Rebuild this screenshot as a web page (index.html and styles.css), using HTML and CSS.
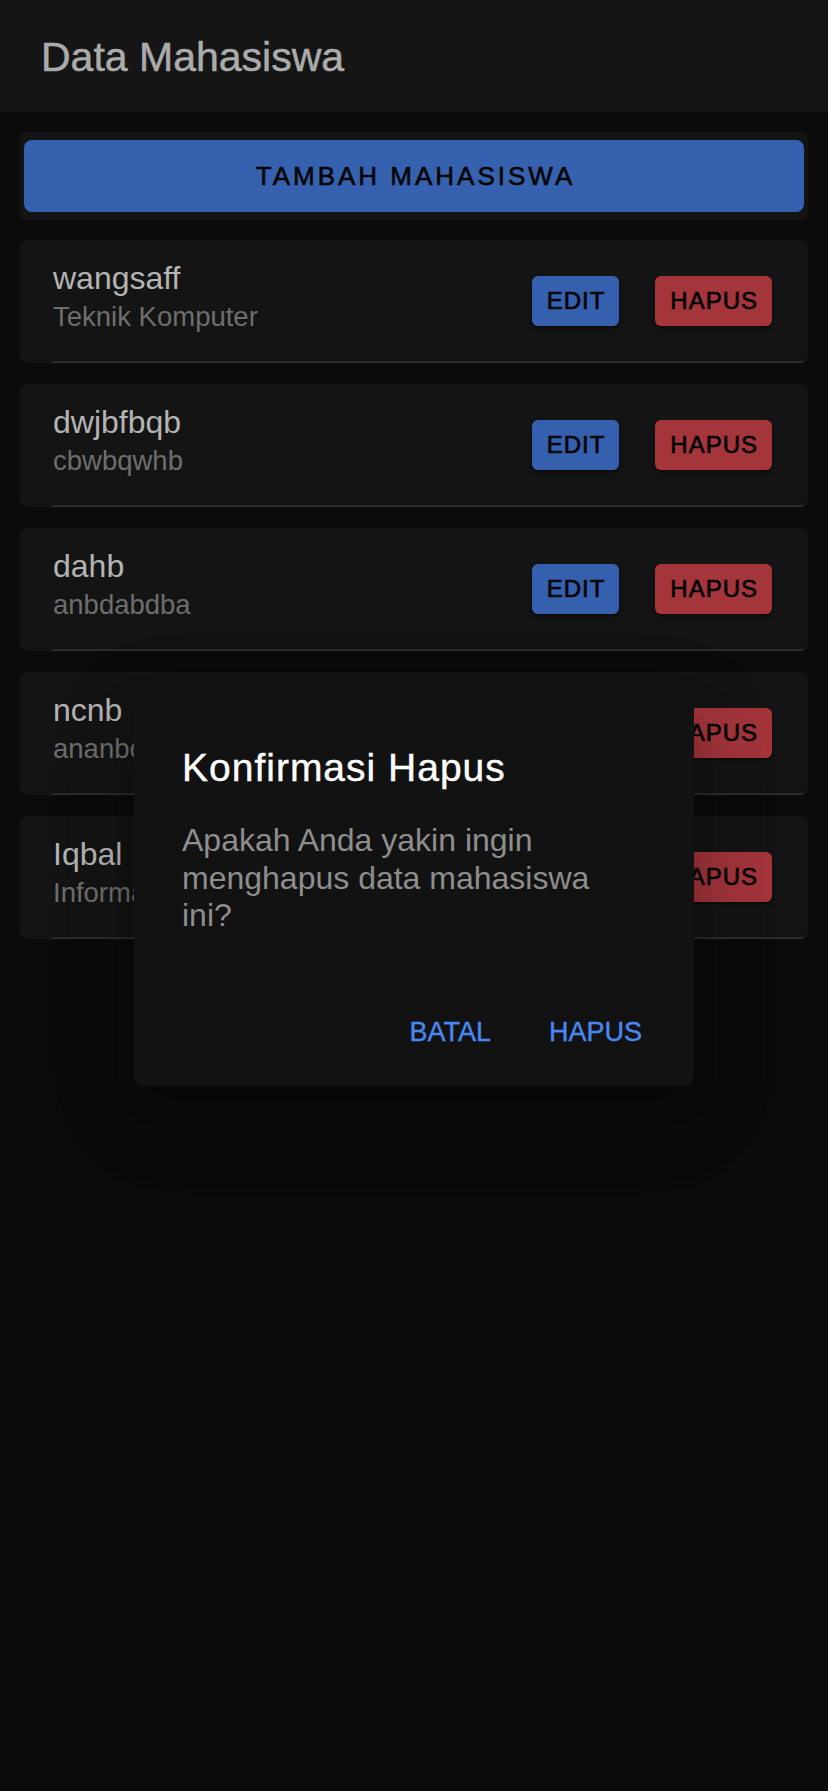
FILE: index.html
```html
<!DOCTYPE html>
<html lang="id">
<head>
<meta charset="utf-8">
<title>Data Mahasiswa</title>
<link rel="stylesheet" href="styles.css">
</head>
<body>
<header class="appbar">
  <h1 class="appbar-title">Data Mahasiswa</h1>
</header>
<main class="content">
  <div class="add-wrap">
    <button class="add-btn">TAMBAH MAHASISWA</button>
  </div>
  <ul class="list">
    <li class="card">
      <div class="card-row">
        <div class="info"><div class="name">wangsaff</div><div class="major">Teknik Komputer</div></div>
        <div class="actions"><button class="btn btn-edit">EDIT</button><button class="btn btn-delete">HAPUS</button></div>
      </div>
    </li>
    <li class="card">
      <div class="card-row">
        <div class="info"><div class="name">dwjbfbqb</div><div class="major">cbwbqwhb</div></div>
        <div class="actions"><button class="btn btn-edit">EDIT</button><button class="btn btn-delete">HAPUS</button></div>
      </div>
    </li>
    <li class="card">
      <div class="card-row">
        <div class="info"><div class="name">dahb</div><div class="major">anbdabdba</div></div>
        <div class="actions"><button class="btn btn-edit">EDIT</button><button class="btn btn-delete">HAPUS</button></div>
      </div>
    </li>
    <li class="card">
      <div class="card-row">
        <div class="info"><div class="name">ncnb</div><div class="major">ananbcbd</div></div>
        <div class="actions"><button class="btn btn-edit">EDIT</button><button class="btn btn-delete">HAPUS</button></div>
      </div>
    </li>
    <li class="card">
      <div class="card-row">
        <div class="info"><div class="name">Iqbal</div><div class="major">Informatika</div></div>
        <div class="actions"><button class="btn btn-edit">EDIT</button><button class="btn btn-delete">HAPUS</button></div>
      </div>
    </li>
  </ul>
</main>
<div class="dialog" role="dialog" aria-labelledby="dlg-title">
  <h2 class="dialog-title" id="dlg-title">Konfirmasi Hapus</h2>
  <p class="dialog-body">Apakah Anda yakin ingin menghapus data mahasiswa ini?</p>
  <div class="dialog-actions">
    <button class="text-btn">BATAL</button>
    <button class="text-btn">HAPUS</button>
  </div>
</div>
</body>
</html>
```
FILE: styles.css
```css
* { box-sizing: border-box; }

html, body {
  margin: 0;
  padding: 0;
}

body {
  width: 828px;
  min-height: 1791px;
  background: #0b0b0b;
  font-family: "Liberation Sans", Arial, sans-serif;
  position: relative;
}

button {
  font-family: inherit;
  border: none;
  cursor: pointer;
}

.appbar {
  height: 112px;
  background: #151515;
  padding: 33px 41px 0;
}

.appbar-title {
  margin: 0;
  font-size: 41px;
  line-height: 48px;
  font-weight: normal;
  color: #ababab;
  -webkit-text-stroke: 0.5px #ababab;
}

.content {
  padding: 20px 20px 0;
}

.add-wrap {
  height: 88px;
  padding: 8px 4px;
  background: #141414;
  border-radius: 6px;
}

.add-btn {
  width: 100%;
  height: 72px;
  background: #3561ae;
  border-radius: 8px;
  color: #050505;
  font-size: 26px;
  letter-spacing: 3px;
  padding: 0 0 0 3px;
  -webkit-text-stroke: 0.6px #050505;
}

.list {
  list-style: none;
  margin: 20px 0 0;
  padding: 0;
  display: flex;
  flex-direction: column;
  gap: 21px;
}

.card {
  background: #141414;
  border-radius: 8px;
  overflow: hidden;
}

.card-row {
  height: 123px;
  margin-left: 32px;
  padding: 0 36px 0 1px;
  border-bottom: 2px solid #2b2b2b;
  display: flex;
  align-items: center;
}

.info {
  flex: 1;
  margin-bottom: 9px;
}

.name {
  font-size: 32px;
  line-height: 42px;
  color: #b4b4b4;
}

.major {
  font-size: 27.5px;
  line-height: 36px;
  color: #6e6e6e;
}

.actions {
  display: flex;
  gap: 36px;
}

.btn {
  height: 50px;
  padding: 0 14px 0 15px;
  border-radius: 6px;
  font-size: 24px;
  letter-spacing: 1px;
  color: #050505;
  box-shadow: 0 2px 3px rgba(0, 0, 0, 0.45);
  -webkit-text-stroke: 0.7px #050505;
}

.btn-edit { background: #3560ad; }
.btn-delete { background: #a3353b; }

.dialog {
  position: absolute;
  left: 134px;
  top: 697px;
  width: 560px;
  background: #121212;
  border-radius: 8px;
  padding: 48px 0 30px;
  box-shadow:
    0 40px 70px 4px rgba(0, 0, 0, 0.14),
    0 18px 80px 12px rgba(0, 0, 0, 0.12),
    0 22px 30px -14px rgba(0, 0, 0, 0.25);
}

.dialog-title {
  margin: 0;
  padding: 0 56px 0 48px;
  font-size: 39px;
  line-height: 46px;
  letter-spacing: 1px;
  font-weight: normal;
  color: #ffffff;
  -webkit-text-stroke: 0.4px #ffffff;
}

.dialog-body {
  margin: 31px 0 0;
  padding: 0 56px 0 48px;
  font-size: 32px;
  line-height: 37.7px;
  color: #8e8e8e;
}

.dialog-actions {
  margin-top: 73px;
  padding-right: 36px;
  display: flex;
  justify-content: flex-end;
  gap: 26px;
}

.text-btn {
  height: 48px;
  padding: 0 16px;
  background: transparent;
  color: #4a88f0;
  font-size: 27px;
  -webkit-text-stroke: 0.4px #4a88f0;
}
```
